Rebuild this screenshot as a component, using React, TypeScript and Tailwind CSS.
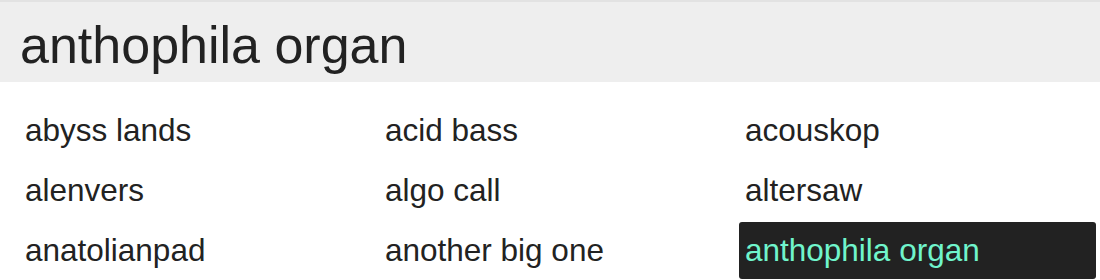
import React from "react";

const presets = [
  "abyss lands",
  "acid bass",
  "acouskop",
  "alenvers",
  "algo call",
  "altersaw",
  "anatolianpad",
  "another big one",
  "anthophila organ",
];

const App = () => {
  const selected = "anthophila organ";

  return (
    <div className="h-[280px] w-[1100px] overflow-hidden bg-white font-['Liberation_Sans',Arial,sans-serif] text-[#222]">
      <div className="flex h-[82px] items-center border-t-2 border-[#e2e2e2] bg-[#eeeeee] pl-[20px] pt-[5px]">
        <span className="text-[52px] leading-none">{selected}</span>
      </div>
      <div className="grid grid-cols-3 gap-[3px] pl-[19px] pr-[4px] pt-[20px]">
        {presets.map((name) => (
          <div
            key={name}
            className={
              name === selected
                ? "h-[57px] rounded-[3px] bg-[#222222] px-[6px] text-[31.5px] leading-[57px] text-[#70f5cc]"
                : "h-[57px] px-[6px] text-[31.5px] leading-[57px]"
            }
          >
            {name}
          </div>
        ))}
      </div>
    </div>
  );
};

export default App;
